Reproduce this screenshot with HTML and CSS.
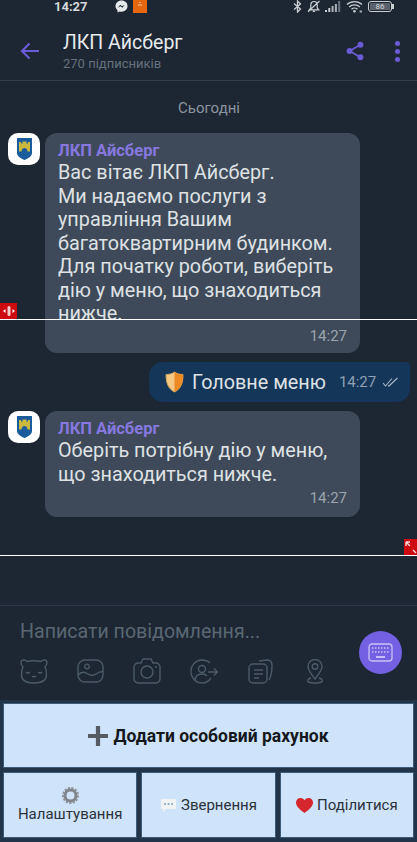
FILE: index.html
```html
<!DOCTYPE html>
<html lang="uk">
<head>
    <meta charset="UTF-8">
    <meta name="viewport" content="width=device-width, initial-scale=1.0">
    <title>ЛКП Айсберг</title>
    <link rel="stylesheet" href="styles.css">
</head>
<body>
    <div class="app">
        <!-- Status bar -->
        <div class="status">
            <span class="status-time">14:27</span>
            <svg class="status-msgr" width="13" height="13" viewBox="0 0 13 13"><path d="M6.5 0.5C3 0.5 0.5 3 0.5 6c0 1.7.8 3.2 2 4.200V12.500l2-1.100c.6.2 1.300.3 2 .3 3.500 0 6-2.500 6-5.700S10 .5 6.500.5z" fill="#e6e9ec"/><path d="M2.800 7.800l2.500-3 1.700 1.500 2.800-1.600-2.500 3-1.700-1.500z" fill="#1c2733"/></svg>
            <svg class="status-app" width="14" height="13" viewBox="0 0 14 13"><rect width="14" height="13" fill="#e8660f"/><path d="M5 5h4M6 2.500h1.500" stroke="#f6c9a0" stroke-width="1"/></svg>
            <span class="status-right">
                <svg width="9" height="13" viewBox="0 0 9 13"><path d="M1 3.500l6.500 5.500L4.500 12V1l3 3L1 9.500" fill="none" stroke="#c9ced3" stroke-width="1.300"/></svg>
                <svg width="14" height="13" viewBox="0 0 14 13"><path d="M7 1.500c-2 0-3.200 1.500-3.200 3.500v3L2.300 9.800h9.400L10.200 8V5C10.200 3 9 1.500 7 1.500zM5.800 11.300h2.400M1 11.800L12.500 1" fill="none" stroke="#c9ced3" stroke-width="1.200"/></svg>
                <svg class="status-signal" width="16" height="11" viewBox="0 0 16 11"><path d="M0 9h2v2H0zM3.300 7h2v4h-2z" fill="#c9ced3"/><path d="M6.600 5h2v6h-2zM9.900 3h2v8h-2z" fill="#aab0b6"/><path d="M13.200 0h2v11h-2z" fill="#6d7680"/></svg>
                <svg class="status-wifi" width="17" height="13" viewBox="0 0 17 13"><path d="M1 4.500c4-3.800 11-3.800 15 0M3.200 6.900c2.800-2.600 7.800-2.600 10.600 0M5.500 9.200c1.600-1.400 4.400-1.400 6 0" fill="none" stroke="#c9ced3" stroke-width="1.300"/><circle cx="8.500" cy="11.200" r="1.300" fill="#c9ced3"/><circle cx="14.800" cy="11.500" r="1.300" fill="#9aa1a8"/></svg>
                <span class="battery"><span class="battery-level">86</span></span>
            </span>
        </div>

        <!-- Channel header -->
        <header class="topbar">
            <svg class="back" width="20" height="18" viewBox="0 0 20 18"><path d="M19 9H2M9.500 1.500L2 9l7.500 7.500" fill="none" stroke="#6a5bd6" stroke-width="2.200"/></svg>
            <div class="title">
                <h1>ЛКП Айсберг</h1>
                <p>270 підписників</p>
            </div>
            <svg class="share" width="18" height="20" viewBox="0 0 20 22"><path d="M16 4L4 11l12 7" fill="none" stroke="#6a5bd6" stroke-width="2"/><circle cx="16" cy="4" r="3.300" fill="#6a5bd6"/><circle cx="4" cy="11" r="3.300" fill="#6a5bd6"/><circle cx="16" cy="18" r="3.300" fill="#6a5bd6"/></svg>
            <div class="dots"><i></i><i></i><i></i></div>
        </header>

        <!-- Messages -->
        <main class="chat">
            <div class="date">Сьогодні</div>

            <div class="msg">
                <div class="avatar">
                    <svg width="15" height="22" viewBox="0 0 15 22"><path d="M0 0h15v15c0 3.500-4 5.500-7.500 7C4 20.500 0 18.500 0 15z" fill="#1b5c9c"/><path d="M2 13.500V4h2v1.500h1.500V3.500h4v2H11V4h2v9.500h-2.500c0-2-1.300-3.500-3-3.500s-3 1.500-3 3.500z" fill="#cdb83e"/></svg>
                </div>
                <div class="bubble">
                    <div class="name">ЛКП Айсберг</div>
                    <div class="text text-cut">Вас вітає ЛКП Айсберг.<br>Ми надаємо послуги з<br>управління Вашим<br>багатоквартирним будинком.<br>Для початку роботи, виберіть<br>дію у меню, що знаходиться<br>нижче.</div>
                    <div class="time time-first">14:27</div>
                </div>
            </div>

            <div class="out">
                <svg class="shield" width="19" height="22" viewBox="0 0 19 22"><path d="M9.500 1C7 2.800 4 3.500 1 3.500 1 11 2.500 17.500 9.500 21c7-3.500 8.500-10 8.500-17.500-3 0-6-.7-8.500-2.500z" fill="#f6c884" stroke="#c9a05a"/><path d="M9.500 1c2.500 1.800 5.500 2.500 8.500 2.500 0 7.500-1.500 14-8.500 17.500z" fill="#ee8a24"/></svg>
                <span class="out-text">Головне меню</span>
                <span class="out-time">14:27</span>
                <svg width="17" height="10" viewBox="0 0 17 10"><path d="M1 6l2.500 3L10 1.500M6 8.500L7 9l8.500-8" fill="none" stroke="#a9b6c4" stroke-width="1.100"/></svg>
            </div>

            <div class="msg">
                <div class="avatar">
                    <svg width="15" height="22" viewBox="0 0 15 22"><path d="M0 0h15v15c0 3.500-4 5.500-7.500 7C4 20.500 0 18.500 0 15z" fill="#1b5c9c"/><path d="M2 13.500V4h2v1.500h1.500V3.500h4v2H11V4h2v9.500h-2.500c0-2-1.300-3.500-3-3.500s-3 1.500-3 3.500z" fill="#cdb83e"/></svg>
                </div>
                <div class="bubble bubble-short">
                    <div class="name">ЛКП Айсберг</div>
                    <div class="text">Оберіть потрібну дію у меню,<br>що знаходиться нижче.</div>
                    <div class="time">14:27</div>
                </div>
            </div>
        </main>

        <!-- Composer -->
        <section class="composer">
            <div class="placeholder">Написати повідомлення...</div>
            <div class="tools">
                <svg width="28" height="26" viewBox="0 0 28 26"><path d="M7 3.500C5.500 1.500 1 1 1 4.500c0 2 .7 3.200 2 4C2 11 1.500 14 1.500 17c0 5.500 4.500 8 12.500 8s12.500-2.500 12.500-8c0-3-.5-6-1.500-8.500 1.300-.8 2-2 2-4 0-3.500-4.500-3-6-1-4.500-1-9.500-1-14 0z" fill="none" stroke="#4c5a69" stroke-width="1.400" stroke-linejoin="round"/><path d="M6 14c1 1.300 2.800 1.300 3.800 0M18.200 14c1 1.300 2.800 1.300 3.800 0M12 18c1.200.9 2.800.9 4 0" fill="none" stroke="#4c5a69" stroke-width="1.400"/></svg>
                <svg width="27" height="24" viewBox="0 0 27 24"><rect x="1" y="1" width="25" height="22" rx="7" fill="none" stroke="#4c5a69" stroke-width="1.400"/><circle cx="10" cy="7.500" r="2.300" fill="none" stroke="#4c5a69" stroke-width="1.300"/><path d="M1 16c3-3.500 6-3.500 9-1.500s6 2.500 9 .5 4-2.500 7-2.500" fill="none" stroke="#4c5a69" stroke-width="1.400"/></svg>
                <svg width="28" height="26" viewBox="0 0 28 26"><path d="M5 5h3l2-4h8l2 4h3c2 0 4 2 4 4v12c0 2-2 4-4 4H5c-2 0-4-2-4-4V9c0-2 2-4 4-4z" fill="none" stroke="#4c5a69" stroke-width="1.400"/><circle cx="14" cy="14" r="6" fill="none" stroke="#4c5a69" stroke-width="1.400"/><circle cx="23" cy="9" r="1" fill="#4c5a69"/></svg>
                <svg width="29" height="25" viewBox="0 0 29 25"><path d="M20 4c-2-2-5-3-8-3C6 1 1 6 1 12.500S6 24 12 24c4 0 7-2 9-5" fill="none" stroke="#4c5a69" stroke-width="1.400"/><circle cx="12" cy="10" r="3.500" fill="none" stroke="#4c5a69" stroke-width="1.400"/><path d="M5 22c0-5 3-7 7-7 2 0 4 .6 5 2M18 13h9M24 9.500l3.500 3.500-3.500 3.500" fill="none" stroke="#4c5a69" stroke-width="1.400"/></svg>
                <svg width="26" height="25" viewBox="0 0 26 25"><rect x="1" y="5" width="18" height="19" rx="4" fill="none" stroke="#4c5a69" stroke-width="1.400"/><path d="M6 11h9M6 15h9M6 19h5M11 2l8-1c3 0 5 2 5 5 0 5 0 10-3 15" fill="none" stroke="#4c5a69" stroke-width="1.400"/></svg>
                <svg class="tool-pin" width="20" height="26" viewBox="0 0 20 26"><path d="M10 21C6 16 3 12 3 8.500a7 7 0 0 1 14 0C17 12 14 16 10 21z" fill="none" stroke="#4c5a69" stroke-width="1.400"/><circle cx="10" cy="8.500" r="2.800" fill="none" stroke="#4c5a69" stroke-width="1.400"/><path d="M6 20c-6 2-4 5 4 5s10-3 4-5" fill="none" stroke="#4c5a69" stroke-width="1.400"/></svg>
            </div>
            <div class="fab">
                <svg width="25" height="19" viewBox="0 0 25 19"><rect x="1" y="1" width="23" height="17" rx="3" fill="none" stroke="#c9c3f4" stroke-width="1.300"/><path d="M4 5h17M4 9h17" fill="none" stroke="#c9c3f4" stroke-width="1.500" stroke-dasharray="1.500 1.500"/><path d="M8 14h9" stroke="#dcd8f8" stroke-width="1.600"/></svg>
            </div>
        </section>

        <!-- Bot keyboard -->
        <section class="keyboard">
            <button class="key key-wide">
                <svg width="20" height="20" viewBox="0 0 19 19"><path d="M7.500 0h4v7.500H19v4h-7.500V19h-4v-7.500H0v-4h7.500z" fill="#555b62"/></svg>
                Додати особовий рахунок
            </button>
            <button class="key key-col">
                <svg width="17" height="17" viewBox="0 0 17 17"><circle cx="8.500" cy="8.500" r="5.500" fill="none" stroke="#7f858b" stroke-width="3"/><circle cx="8.500" cy="8.500" r="7.500" fill="none" stroke="#8d9399" stroke-width="2" stroke-dasharray="2.200 1.400"/></svg>
                Налаштування
            </button>
            <button class="key">
                <svg width="17" height="15" viewBox="0 0 17 15"><path d="M2 1h13c.6 0 1 .4 1 1v8c0 .6-.4 1-1 1H6l-3 3v-3H2c-.6 0-1-.4-1-1V2c0-.6.4-1 1-1z" fill="#f0f2f4"/><circle cx="5" cy="6" r="1" fill="#7fa0c8"/><circle cx="8.500" cy="6" r="1" fill="#7fa0c8"/><circle cx="12" cy="6" r="1" fill="#7fa0c8"/></svg>
                Звернення
            </button>
            <button class="key">
                <svg width="17" height="15" viewBox="0 0 17 15"><path d="M8.500 15C3 11 0 8 0 4.500 0 2 2 0 4.500 0c1.600 0 3 .8 4 2.200C9.500.8 10.900 0 12.500 0 15 0 17 2 17 4.500 17 8 14 11 8.500 15z" fill="#d4262c"/></svg>
                Поділитися
            </button>
        </section>

        <!-- Screen recorder overlay -->
        <div class="rec-line rec-line-top"></div>
        <div class="rec-handle rec-handle-left">
            <svg width="14" height="12" viewBox="0 0 14 12"><rect x="5.500" y="1" width="3" height="10" rx="1.500" fill="#f4c9c9"/><path d="M3.500 4v4L1 6zM10.500 4v4L13 6z" fill="#fff"/></svg>
        </div>
        <div class="rec-line rec-line-bottom"></div>
        <div class="rec-handle rec-handle-right">
            <svg width="13" height="14" viewBox="0 0 13 14"><path d="M2 2l4 4M2 2h4M2 2v4M9 10l3 3" fill="none" stroke="#f8dede" stroke-width="1.300"/></svg>
        </div>
    </div>
</body>
</html>
```

FILE: styles.css
```css
/* Basic styling */
* {
    box-sizing: border-box;
}

body {
    margin: 0;
    background-color: #1c2733;
    font-family: 'Roboto', sans-serif;
}

.app {
    position: relative;
    width: 417px;
    height: 842px;
    overflow: hidden;
    display: flex;
    flex-direction: column;
    background-color: #1c2733;
}

/* Status bar */
.status {
    height: 13px;
    display: flex;
    align-items: center;
    padding: 0 25px 0 54px;
    color: #d5d9dd;
    flex-shrink: 0;
}

.status-time {
    font-size: 13px;
    font-weight: 700;
    width: 61px;
}

.status-msgr {
    margin-right: 5px;
}

.status-right {
    margin-left: auto;
    display: flex;
    align-items: center;
    gap: 5px;
}

.status-signal {
    margin-left: -1px;
}

.battery {
    position: relative;
    width: 24px;
    height: 11px;
    border: 1px solid #c9ced3;
    border-radius: 3px;
    padding: 1px;
    display: flex;
}

.battery::after {
    content: '';
    position: absolute;
    top: 2px;
    right: -3px;
    width: 2px;
    height: 5px;
    background-color: #c9ced3;
}

.battery-level {
    flex: 1;
    background-color: #59626c;
    color: #d5d9dd;
    font-size: 8px;
    line-height: 7px;
    text-align: center;
}

/* Channel header */
.topbar {
    height: 68px;
    flex-shrink: 0;
    display: flex;
    align-items: center;
    padding: 9px 17px 0 20px;
    border-bottom: 1px solid #323f4e;
}

.title {
    margin-left: 23px;
    flex: 1;
}

.title h1 {
    margin: 0;
    font-size: 19.5px;
    font-weight: 400;
    line-height: 24px;
    color: #e8eaed;
}

.title p {
    margin: 1px 0 0;
    font-size: 13px;
    line-height: 16px;
    color: #66717d;
}

.dots {
    margin-left: 31px;
    display: flex;
    flex-direction: column;
    gap: 3px;
}

.dots i {
    width: 5px;
    height: 5px;
    border-radius: 50%;
    background-color: #6a5bd6;
}

/* Messages */
.chat {
    height: 525px;
    flex-shrink: 0;
    padding: 18px 7px 0 8px;
    border-bottom: 1px solid #2b3a4e;
}

.date {
    height: 18px;
    margin-bottom: 16px;
    font-size: 15px;
    line-height: 18px;
    text-align: center;
    color: #8b95a0;
}

.msg {
    display: flex;
    align-items: flex-start;
    margin-bottom: 9px;
}

.avatar {
    width: 32px;
    height: 32px;
    margin-right: 5px;
    flex-shrink: 0;
    border-radius: 10px;
    background-color: #fff;
    display: flex;
    align-items: center;
    justify-content: center;
}

.bubble {
    width: 315px;
    padding: 8px 13px 8px;
    border-radius: 12px;
    background-color: #3e4a59;
}

.bubble-short {
    padding-bottom: 10px;
}

.name {
    font-size: 16.500px;
    font-weight: 700;
    line-height: 20px;
    color: #8778e0;
}

.text {
    font-size: 19.800px;
    line-height: 23.500px;
    color: #dfe2e5;
}

.text-cut {
    height: 158px;
    overflow: hidden;
}

.time {
    margin-top: 3px;
    font-size: 15px;
    line-height: 18px;
    text-align: right;
    color: #9aa4ae;
}

.time-first {
    margin-top: 8px;
}

.out {
    width: 261px;
    height: 40px;
    margin: 0 0 9px auto;
    padding-left: 16px;
    display: flex;
    align-items: center;
    border-radius: 14px 4px 14px 14px;
    background-color: #143659;
}

.out-text {
    margin-left: 8px;
    font-size: 19.800px;
    color: #dfe2e5;
}

.out-time {
    margin: 0 6px 0 13px;
    font-size: 15px;
    color: #8fa0b2;
}

/* Composer */
.composer {
    position: relative;
    height: 94px;
    flex-shrink: 0;
    padding: 15px 0 0 20px;
}

.placeholder {
    font-size: 19.600px;
    line-height: 22px;
    color: #5a6773;
}

.tools {
    margin-top: 15px;
    display: flex;
    align-items: center;
    gap: 29px;
}

.tool-pin {
    margin-left: 2px;
}

.fab {
    position: absolute;
    top: 25px;
    left: 359px;
    width: 43px;
    height: 43px;
    border-radius: 50%;
    background-color: #7360e2;
    display: flex;
    align-items: center;
    justify-content: center;
}

/* Bot keyboard */
.keyboard {
    flex: 1;
    padding: 3px 3px 4px;
    background-color: #22344a;
    display: grid;
    grid-template-columns: repeat(3, 1fr);
    grid-template-rows: 65px 66px;
    gap: 4px;
}

.key {
    border: 1px solid #3d5a78;
    padding: 0;
    background-color: #cfe4fb;
    color: #2b3138;
    font-family: 'Roboto', sans-serif;
    font-size: 15px;
    display: flex;
    align-items: center;
    justify-content: center;
    gap: 4px;
}

.key-wide {
    grid-column: 1 / 4;
    font-size: 17.500px;
    font-weight: 700;
    color: #14181c;
    gap: 5px;
}

.key-col {
    flex-direction: column;
    gap: 1px;
}

/* Screen recorder overlay */
.rec-line {
    position: absolute;
    left: 0;
    width: 100%;
    height: 1px;
    background-color: #fff;
}

.rec-line-top {
    top: 319px;
}

.rec-line-bottom {
    top: 555px;
}

.rec-handle {
    position: absolute;
    height: 16px;
    background-color: #cc0a0f;
    display: flex;
    align-items: center;
    justify-content: center;
}

.rec-handle-left {
    top: 303px;
    left: 0;
    width: 17px;
}

.rec-handle-right {
    top: 539px;
    left: 404px;
    width: 13px;
}
```
